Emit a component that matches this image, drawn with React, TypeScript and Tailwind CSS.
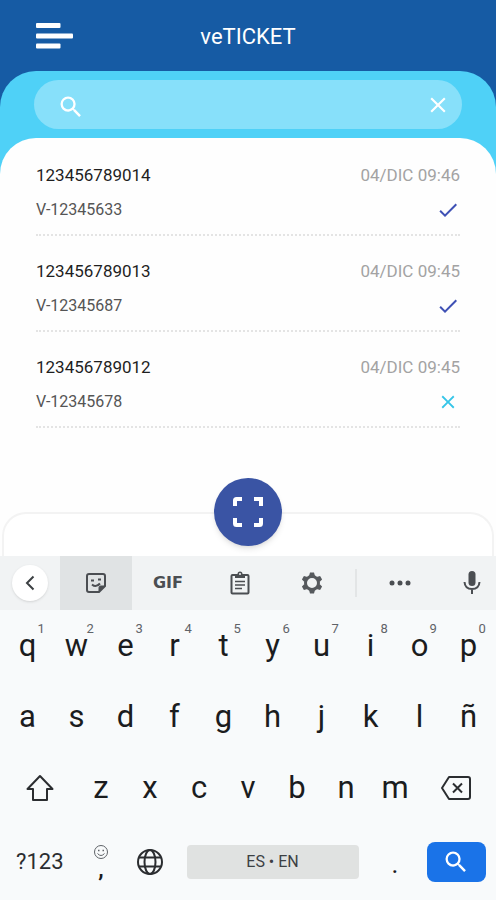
import React, { useState } from 'react';
import { MdCheck, MdClose, MdSearch } from 'react-icons/md';

interface Ticket {
  code: string;
  document: string;
  date: string;
  valid: boolean;
}

const tickets: Ticket[] = [
  { code: '123456789014', document: 'V-12345633', date: '04/DIC 09:46', valid: true },
  { code: '123456789013', document: 'V-12345687', date: '04/DIC 09:45', valid: true },
  { code: '123456789012', document: 'V-12345678', date: '04/DIC 09:45', valid: false },
];

const topRow = ['q', 'w', 'e', 'r', 't', 'y', 'u', 'i', 'o', 'p'];
const middleRow = ['a', 's', 'd', 'f', 'g', 'h', 'j', 'k', 'l', 'ñ'];
const bottomRow = ['z', 'x', 'c', 'v', 'b', 'n', 'm'];

const MenuIcon = () => (
  <svg width="37" height="26" viewBox="0 0 37 26" fill="#fff">
    <rect x="0" y="0" width="24.500" height="5" rx="1" />
    <rect x="0" y="10.500" width="37" height="5" rx="1" />
    <rect x="0" y="20.500" width="24.500" height="5" rx="1" />
  </svg>
);

const ScanIcon = () => (
  <svg width="30" height="30" viewBox="0 0 30 30" fill="none" stroke="#fff" strokeWidth="4">
    <path d="M2 9V3.500Q2 2 3.500 2H9M21 2H28V9M28 21V26.500Q28 28 26.500 28H21M9 28H3.500Q2 28 2 26.500V21" />
  </svg>
);

const StickerIcon = () => (
  <svg width="22" height="22" viewBox="0 0 22 22" fill="none" stroke="#4b4e52" strokeWidth="2">
    <path d="M14 20H4Q2 20 2 18V4Q2 2 4 2H18Q20 2 20 4V14Z" />
    <path d="M14 20V15.500Q14 14 15.500 14H20Z" fill="#4b4e52" strokeWidth="1" />
    <path d="M6 8.500H9M13 7.500H16" />
    <path d="M7 12.500Q11 16 15 11.500" />
  </svg>
);

const ClipboardIcon = () => (
  <svg width="20" height="24" viewBox="0 0 20 24" fill="none" stroke="#4b4e52" strokeWidth="2">
    <rect x="1.500" y="4" width="17" height="18.500" rx="1" />
    <path d="M5 3H7.500A2.500 2.500 0 0 1 12.500 3H15V7H5Z" fill="#4b4e52" stroke="none" />
    <circle cx="10" cy="3" r="1" fill="#f1f3f4" stroke="none" />
    <path d="M5 10.500H15M5 14H15M5 17.500H12" strokeWidth="1.500" />
  </svg>
);

const GearIcon = () => (
  <svg width="22" height="22" viewBox="0 0 22 22" fill="none" stroke="#56595d">
    <circle cx="11" cy="11" r="6.500" strokeWidth="3" />
    {[0, 60, 120, 180, 240, 300].map(angle => (
      <path
        key={angle}
        d="M9 0.500H13L14 4H8Z"
        fill="#56595d"
        stroke="none"
        transform={`rotate(${angle} 11 11)`}
      />
    ))}
  </svg>
);

const DotsIcon = () => (
  <svg width="22" height="6" viewBox="0 0 22 6" fill="#4b4e52">
    <circle cx="3" cy="3" r="2.500" />
    <circle cx="11" cy="3" r="2.500" />
    <circle cx="19" cy="3" r="2.500" />
  </svg>
);

const MicIcon = () => (
  <svg width="18" height="24" viewBox="0 0 18 24" fill="none" stroke="#4b4e52" strokeWidth="2">
    <rect x="5.500" y="0" width="7" height="15" rx="3.500" fill="#4b4e52" stroke="none" />
    <path d="M1.500 11Q2 18 9 18Q16 18 16.500 11M9 18V23" />
  </svg>
);

const ShiftIcon = () => (
  <svg width="28" height="28" viewBox="0 0 28 28" fill="none" stroke="#2b2d30" strokeWidth="2" strokeLinejoin="round">
    <path d="M14 2L26.500 15H21V26H7V15H1.500Z" />
  </svg>
);

const BackspaceIcon = () => (
  <svg width="32" height="26" viewBox="0 0 32 26" fill="none" stroke="#2b2d30" strokeWidth="2" strokeLinejoin="round">
    <path d="M9 2H28Q30 2 30 4V22Q30 24 28 24H9L2 13Z" />
    <path d="M13 8.500L22 17.500M22 8.500L13 17.500" />
  </svg>
);

const GlobeIcon = () => (
  <svg width="28" height="28" viewBox="0 0 28 28" fill="none" stroke="#2b2d30" strokeWidth="2">
    <circle cx="14" cy="14" r="12" />
    <ellipse cx="14" cy="14" rx="5.500" ry="12" />
    <path d="M3 9.500H25M3 18.500H25" />
  </svg>
);

const SmileyIcon = () => (
  <svg width="16" height="16" viewBox="0 0 16 16" fill="none" stroke="#5f6368">
    <circle cx="8" cy="8" r="6.500" />
    <path d="M4.500 9.500Q8 13.500 11.500 9.500" />
    <path d="M5 6.500H6.500M9.500 6.500H11" strokeWidth="1.500" />
  </svg>
);

const LetterKey: React.FC<{ letter: string; hint?: string }> = ({ letter, hint }) => (
  <button type="button" className="relative col-span-2 h-full text-[31px] leading-none">
    {letter}
    {hint && (
      <span className="absolute top-3 left-1/2 ml-2.5 w-4 text-left text-[13px] leading-none text-[#5f6368]">
        {hint}
      </span>
    )}
  </button>
);

const Keyboard = () => (
  <section aria-label="Teclado" className="bg-[#f8fafb] text-[#1b1c1e]">
    <div className="grid h-[54px] grid-cols-[60fr_72fr_72fr_72fr_72fr_16fr_72fr_60fr] items-stretch bg-[#f1f3f4]">
      <div className="flex items-center justify-center">
        <button
          type="button"
          aria-label="Volver"
          className="flex h-9 w-9 items-center justify-center rounded-full bg-white shadow-sm"
        >
          <svg width="10" height="16" viewBox="0 0 10 16" fill="none" stroke="#3c4043" strokeWidth="2">
            <path d="M8.500 1.500L2 8L8.500 14.500" />
          </svg>
        </button>
      </div>
      <button type="button" aria-label="Stickers" className="flex items-center justify-center bg-[#e0e3e4]">
        <StickerIcon />
      </button>
      <button type="button" className="font-['DejaVu_Sans'] text-base font-bold text-[#4b4e52]">GIF</button>
      <button type="button" aria-label="Portapapeles" className="flex items-center justify-center">
        <ClipboardIcon />
      </button>
      <button type="button" aria-label="Ajustes" className="flex items-center justify-center">
        <GearIcon />
      </button>
      <div className="h-7 w-0.5 self-center justify-self-center bg-[#e3e5e6]" />
      <button type="button" aria-label="Más" className="flex items-center justify-center">
        <DotsIcon />
      </button>
      <button type="button" aria-label="Voz" className="flex items-center justify-center pl-3">
        <MicIcon />
      </button>
    </div>

    <div className="px-[3px]">
      <div className="grid h-[71px] grid-cols-20 items-center">
        {topRow.map((letter, i) => (
          <LetterKey key={letter} letter={letter} hint={String((i + 1) % 10)} />
        ))}
      </div>
      <div className="grid h-[71px] grid-cols-20 items-center">
        {middleRow.map(letter => <LetterKey key={letter} letter={letter} />)}
      </div>
      <div className="grid h-[71px] grid-cols-20 items-center">
        <button type="button" aria-label="Mayúsculas" className="col-span-3 flex justify-center">
          <ShiftIcon />
        </button>
        {bottomRow.map(letter => <LetterKey key={letter} letter={letter} />)}
        <button type="button" aria-label="Borrar" className="col-span-3 flex justify-center">
          <BackspaceIcon />
        </button>
      </div>
      <div className="grid h-[77px] grid-cols-20 items-center">
        <button type="button" className="col-span-3 text-[22px] text-[#2b2d30]">?123</button>
        <button type="button" className="col-span-2 flex flex-col items-center text-[22px] leading-5 font-bold">
          <SmileyIcon />
          ,
        </button>
        <button type="button" aria-label="Idioma" className="col-span-2 flex justify-center">
          <GlobeIcon />
        </button>
        <button
          type="button"
          className="col-span-8 mx-3 h-[34px] rounded-sm bg-[#e0e2e1] text-base text-[#3c4043]"
        >
          ES • EN
        </button>
        <button type="button" className="col-span-2 pt-1 text-[26px] leading-6">.</button>
        <button
          type="button"
          aria-label="Buscar"
          className="col-span-3 mx-[7px] flex h-10 items-center justify-center rounded-lg bg-[#1a73e8] text-white"
        >
          <MdSearch size={28} />
        </button>
      </div>
    </div>
  </section>
);

const TicketRow: React.FC<{ ticket: Ticket }> = ({ ticket }) => (
  <li className="flex h-24 flex-col justify-end border-b-2 border-dotted border-[#e4e4e4] pb-3">
    <div className="flex items-center justify-between text-[17px] leading-6">
      <span className="text-[#1f1f1f]">{ticket.code}</span>
      <span className="text-[#a3a3a3]">{ticket.date}</span>
    </div>
    <div className="mt-[11px] flex items-center justify-between text-base leading-6">
      <span className="text-[#555]">{ticket.document}</span>
      {ticket.valid ? (
        <MdCheck size={24} className="text-[#3f51b5]" />
      ) : (
        <MdClose size={22} className="mr-px text-[#35c5e8]" />
      )}
    </div>
  </li>
);

const App: React.FC = () => {
  const [query, setQuery] = useState('');
  const visible = tickets.filter(t => t.code.includes(query) || t.document.includes(query));

  return (
    <div className="flex min-h-screen flex-col bg-[#165ba4] font-['Roboto',sans-serif]">
      <header className="relative flex h-[71px] items-center justify-center pt-px">
        <button type="button" aria-label="Menú" className="absolute left-9">
          <MenuIcon />
        </button>
        <h1 className="text-[22px] text-white">veTICKET</h1>
      </header>

      <main className="flex flex-1 flex-col rounded-t-[36px] bg-[#4fd1f7]">
        <div className="mx-[34px] my-[9px] flex h-[49px] items-center rounded-full bg-[#87e0fa] pr-[11px] pl-[23px] text-white">
          <label htmlFor="search" aria-label="Buscar" className="pt-1">
            <MdSearch size={28} />
          </label>
          <input
            id="search"
            value={query}
            onChange={e => setQuery(e.target.value)}
            className="mx-3 min-w-0 flex-1 bg-transparent text-base outline-none"
          />
          <button type="button" aria-label="Limpiar" onClick={() => setQuery('')}>
            <MdClose size={26} />
          </button>
        </div>

        <div className="flex flex-1 flex-col rounded-t-[36px] bg-[#fefefe]">
          <ul className="flex-1 px-9 pt-0.5">
            {visible.map(ticket => <TicketRow key={ticket.code} ticket={ticket} />)}
          </ul>
          <div className="relative mx-0.5 h-11 rounded-t-3xl border-2 border-b-0 border-[#f3f3f3] bg-white">
            <button
              type="button"
              aria-label="Escanear"
              className="absolute -top-9 left-1/2 flex h-[68px] w-[68px] -translate-x-1/2 items-center justify-center rounded-full bg-[#3a54a4] shadow-md"
            >
              <ScanIcon />
            </button>
          </div>
        </div>
      </main>

      <Keyboard />
    </div>
  );
};

export default App;
